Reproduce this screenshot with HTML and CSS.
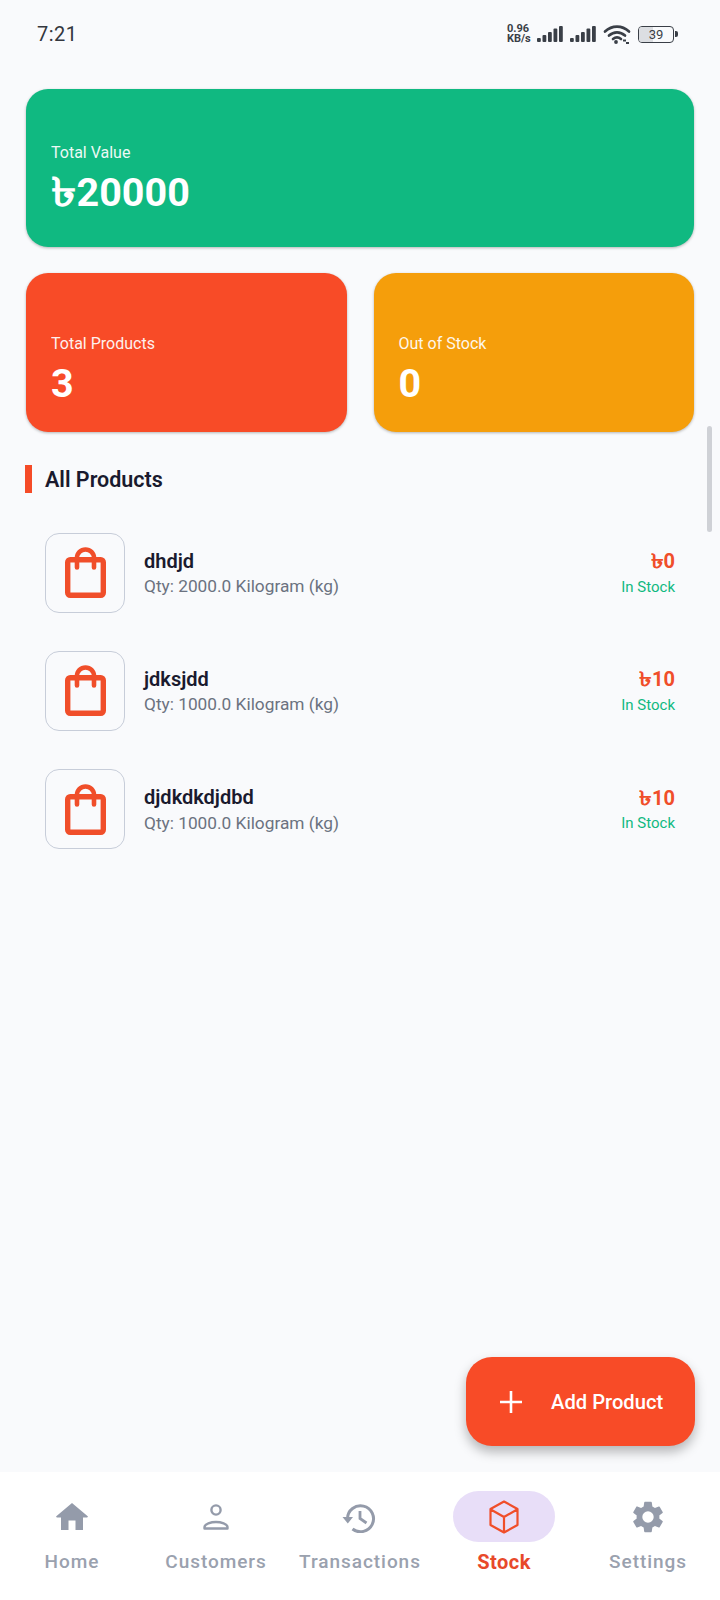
FILE: index.html
```html
<!DOCTYPE html>
<html lang="en">
<head>
<meta charset="utf-8">
<title>Stock</title>
<link rel="stylesheet" href="styles.css">
</head>
<body>
<div class="app">
  <header class="status">
    <span class="time">7:21</span>
    <div class="status-icons">
      <span class="speed"><span>0.96</span><span>KB/s</span></span>
      <svg class="signal" viewBox="0 0 26 16"><g fill="#3a3f47"><rect x="0" y="12" width="3.800" height="4" rx="1"/><rect x="5.500" y="9" width="3.800" height="7" rx="1"/><rect x="11" y="6" width="3.800" height="10" rx="1"/><rect x="16.500" y="2.500" width="3.800" height="13.500" rx="1"/><rect x="22" y="0" width="3.800" height="16" rx="1"/></g></svg>
      <svg class="signal" viewBox="0 0 26 16"><g fill="#3a3f47"><rect x="0" y="12" width="3.800" height="4" rx="1"/><rect x="5.500" y="9" width="3.800" height="7" rx="1"/><rect x="11" y="6" width="3.800" height="10" rx="1"/><rect x="16.500" y="2.500" width="3.800" height="13.500" rx="1"/><rect x="22" y="0" width="3.800" height="16" rx="1"/></g></svg>
      <svg class="wifi" viewBox="0 0 28 20"><path d="M2 7.500C9 1 19 1 26 7.500M6 11.500c4.800-4.300 11.200-4.300 16 0M10 15c2.500-2 5.500-2 8 0" fill="none" stroke="#3a3f47" stroke-width="2.700" stroke-linecap="round"/><circle cx="13" cy="18" r="1.900" fill="#3a3f47"/><path d="M20 16.500h3M23 19h3" stroke="#3a3f47" stroke-width="1.800"/></svg>
      <div class="battery"><div class="battery-body"><span class="battery-fill"></span><span class="battery-num">39</span></div><span class="battery-tip"></span></div>
    </div>
  </header>

  <main class="content">
    <section class="stats">
      <div class="card card-wide green">
        <div class="card-label">Total Value</div>
        <div class="card-value"><span class="taka">৳</span>20000</div>
      </div>
      <div class="card red">
        <div class="card-label">Total Products</div>
        <div class="card-value">3</div>
      </div>
      <div class="card amber">
        <div class="card-label">Out of Stock</div>
        <div class="card-value">0</div>
      </div>
    </section>

    <h2 class="section-title">All Products</h2>

    <ul class="products">
      <li class="product">
        <div class="thumb"><svg viewBox="0 0 41 51"><rect x="2.700" y="12.700" width="35.600" height="35.600" rx="2.500" fill="none" stroke="#f04e2a" stroke-width="5.400"/><path d="M12 20.500V11a8.500 8.500 0 0 1 17 0v9.500" fill="none" stroke="#f04e2a" stroke-width="4.600" stroke-linecap="round"/></svg></div>
        <div class="info"><div class="name">dhdjd</div><div class="qty">Qty: 2000.0 Kilogram (kg)</div></div>
        <div class="price-col"><div class="price"><span class="taka">৳</span>0</div><div class="state">In Stock</div></div>
      </li>
      <li class="product">
        <div class="thumb"><svg viewBox="0 0 41 51"><rect x="2.700" y="12.700" width="35.600" height="35.600" rx="2.500" fill="none" stroke="#f04e2a" stroke-width="5.400"/><path d="M12 20.500V11a8.500 8.500 0 0 1 17 0v9.500" fill="none" stroke="#f04e2a" stroke-width="4.600" stroke-linecap="round"/></svg></div>
        <div class="info"><div class="name">jdksjdd</div><div class="qty">Qty: 1000.0 Kilogram (kg)</div></div>
        <div class="price-col"><div class="price"><span class="taka">৳</span>10</div><div class="state">In Stock</div></div>
      </li>
      <li class="product">
        <div class="thumb"><svg viewBox="0 0 41 51"><rect x="2.700" y="12.700" width="35.600" height="35.600" rx="2.500" fill="none" stroke="#f04e2a" stroke-width="5.400"/><path d="M12 20.500V11a8.500 8.500 0 0 1 17 0v9.500" fill="none" stroke="#f04e2a" stroke-width="4.600" stroke-linecap="round"/></svg></div>
        <div class="info"><div class="name">djdkdkdjdbd</div><div class="qty">Qty: 1000.0 Kilogram (kg)</div></div>
        <div class="price-col"><div class="price"><span class="taka">৳</span>10</div><div class="state">In Stock</div></div>
      </li>
    </ul>
    <div class="scrollbar"></div>
    <button class="fab"><svg viewBox="0 0 24 24"><path d="M12 1v22M1 12h22" stroke="#fff" stroke-width="2.600" fill="none"/></svg><span>Add Product</span></button>
  </main>

  <nav class="nav">
    <div class="nav-item">
      <div class="nav-icon"><svg viewBox="0 0 32 27"><path d="M16 0L0 13.500l.8 1h4.200V27h7.500V17.500h7V27H27V14.500h4.200l.8-1z" fill="#949baa"/></svg></div>
      <div class="nav-label">Home</div>
    </div>
    <div class="nav-item">
      <div class="nav-icon"><svg class="icon-person" viewBox="0 0 26 26"><circle cx="13" cy="6" r="4.600" fill="none" stroke="#949baa" stroke-width="2.400"/><path d="M1.500 24.500V23c0-3 6.500-5 11.500-5s11.500 2 11.500 5v1.500z" fill="none" stroke="#949baa" stroke-width="2.400" stroke-linejoin="round"/></svg></div>
      <div class="nav-label">Customers</div>
    </div>
    <div class="nav-item">
      <div class="nav-icon"><svg class="icon-history" viewBox="0 -1.500 36 32"><path d="M5.500 16A13 13 0 1 1 10.500 26.500" fill="none" stroke="#949baa" stroke-width="3"/><path d="M0.500 14.500h10.500l-5.200 6.500z" fill="#949baa"/><path d="M18 8.500V16l6.500 4.500" fill="none" stroke="#949baa" stroke-width="2.800"/></svg></div>
      <div class="nav-label">Transactions</div>
    </div>
    <div class="nav-item active">
      <div class="nav-icon"><svg viewBox="0 0 32 34"><path d="M16 1.500L29.500 9v16L16 32.500 2.500 25V9zM2.800 9.500L16 17l13.200-7.500M16 17v15.500" fill="none" stroke="#f04e2a" stroke-width="2.200" stroke-linejoin="round"/></svg></div>
      <div class="nav-label">Stock</div>
    </div>
    <div class="nav-item">
      <div class="nav-icon"><svg class="icon-gear" viewBox="0 0 24 24"><path d="M19.140 12.940c.04-.3.060-.61.060-.94s-.02-.64-.07-.94l2.030-1.580a.49.49 0 0 0 .12-.61l-1.920-3.320a.49.49 0 0 0-.59-.22l-2.390.96a7 7 0 0 0-1.620-.94l-.36-2.540a.48.480 0 0 0-.48-.41h-3.840a.48.480 0 0 0-.47.410l-.36 2.540c-.59.24-1.130.57-1.620.94l-2.390-.96a.48.480 0 0 0-.59.220L2.740 8.870a.48.480 0 0 0 .12.610l2.030 1.580c-.05.300-.09.630-.09.940s.02.640.07.940l-2.030 1.580a.49.490 0 0 0-.12.610l1.920 3.320c.12.220.37.290.59.220l2.390-.96c.5.380 1.030.70 1.620.94l.36 2.540c.05.240.24.410.48.410h3.840c.24 0 .44-.17.47-.41l.36-2.540c.59-.24 1.130-.56 1.620-.94l2.390.96c.22.080.47 0 .59-.22l1.920-3.320a.48.480 0 0 0-.12-.61zM12 15.600A3.600 3.600 0 1 1 12 8.400a3.600 3.600 0 0 1 0 7.200z" fill="#949baa"/></svg></div>
      <div class="nav-label">Settings</div>
    </div>
  </nav>
</div>
</body>
</html>
```

FILE: styles.css
```css
* { box-sizing: border-box; }
html, body { margin: 0; padding: 0; }
body { font-family: Roboto, "Noto Sans", "DejaVu Sans", sans-serif; background: #f9fafc; color: #1a1a2e; }
.app { width: 720px; height: 1600px; display: flex; flex-direction: column; background: #f9fafc; overflow: hidden; }

.status { height: 68px; flex: none; display: flex; justify-content: space-between; align-items: center; padding: 0 42px 0 37px; }
.time { font-size: 20px; color: #33373e; letter-spacing: .5px; }
.status-icons { display: flex; align-items: center; gap: 7px; }
.speed { display: flex; flex-direction: column; font-size: 11px; line-height: 10px; font-weight: 700; color: #3a3f47; width: 26px; margin-right: -3px; }
.signal { width: 26px; height: 16px; display: block; }
.wifi { width: 28px; height: 20px; display: block; }
.battery { display: flex; align-items: center; }
.battery-body { position: relative; width: 36px; height: 17px; border: 1.500px solid #3a3f47; border-radius: 4px; display: flex; align-items: center; justify-content: center; overflow: hidden; }
.battery-fill { position: absolute; left: 0; top: 0; bottom: 0; width: 42%; background: #dcdee2; }
.battery-num { position: relative; font-size: 13px; color: #3a3f47; }
.battery-tip { width: 3px; height: 6px; margin-left: 1px; background: #3a3f47; border-radius: 0 2px 2px 0; }

.content { position: relative; flex: 1; padding: 21px 26px 0 26px; min-height: 0; }
.stats { display: grid; grid-template-columns: 1fr 1fr; gap: 26px 27px; }
.card { height: 159px; border-radius: 22px; padding: 35px 25px 0; display: flex; flex-direction: column; justify-content: center; color: #fff; box-shadow: 0 1px 3px rgba(0,0,0,.28); }
.card-wide { grid-column: 1 / 3; height: 158px; padding-top: 22px; }
.green { background: #10b981; }
.red { background: #f84b27; }
.amber { background: #f59e0b; }
.card-label { font-size: 16px; line-height: 20px; opacity: .92; }
.card-value { font-size: 39.500px; line-height: 44px; font-weight: 700; margin-top: 8px; }
.taka { display: inline-block; transform: scaleX(1.28); transform-origin: left center; margin-right: .14em; }

.section-title { margin: 33px 0 0 -1px; height: 28px; border-left: 7px solid #f54b27; padding-left: 13px; font-size: 21.500px; line-height: 30px; font-weight: 600; color: #1a1a2e; }

.products { list-style: none; margin: 39.600px 0 0 0; padding: 0 19px; }
.product { display: flex; align-items: center; height: 80px; margin-bottom: 38.300px; }
.thumb { width: 80px; height: 80px; flex: none; border: 1px solid #c7cdd9; border-radius: 14px; display: flex; align-items: center; justify-content: center; }
.thumb svg { width: 41px; height: 51px; display: block; }
.info { flex: 1; margin-left: 19px; padding-top: 3px; }
.name { font-size: 20px; line-height: 25.500px; font-weight: 600; color: #1a1a2e; }
.qty { font-size: 17.300px; line-height: 25.500px; color: #6b7280; }
.price-col { text-align: right; padding-top: 4px; }
.price { font-size: 20px; line-height: 25.500px; font-weight: 700; color: #f04e2a; }
.state { font-size: 15px; line-height: 25.500px; color: #10b981; }

.scrollbar { position: absolute; right: 8px; top: 358px; width: 5px; height: 106px; background: #cfd1d6; border-radius: 3px; }

.fab { position: absolute; right: 25px; bottom: 26px; width: 229px; height: 89px; border: 0; border-radius: 26px; background: #f84b27; color: #fff; display: flex; align-items: center; padding: 0 0 0 33px; font-family: inherit; font-size: 20.200px; font-weight: 500; box-shadow: 0 6px 12px rgba(0,0,0,.28); }
.fab svg { width: 24px; height: 24px; margin-right: 28px; display: block; }

.nav { height: 128px; flex: none; background: #fff; display: grid; grid-template-columns: repeat(5, 144px); }
.nav-item { display: flex; flex-direction: column; align-items: center; padding-top: 19px; }
.nav-icon { width: 102px; height: 51px; border-radius: 26px; display: flex; align-items: center; justify-content: center; }
.nav-icon svg { width: 32px; height: 27px; display: block; }
.nav-icon .icon-person { width: 26px; height: 26px; }
.nav-icon .icon-history { width: 36px; height: 32px; }
.nav-icon .icon-gear { width: 38px; height: 38px; }
.active .nav-icon { background: #e8def8; }
.active .nav-icon svg { height: 34px; }
.nav-label { margin-top: 8px; font-size: 19px; line-height: 24px; font-weight: 500; letter-spacing: .95px; color: #9aa1ae; white-space: nowrap; }
.active .nav-label { color: #e8492a; font-size: 20px; font-weight: 700; letter-spacing: .5px; }
```
